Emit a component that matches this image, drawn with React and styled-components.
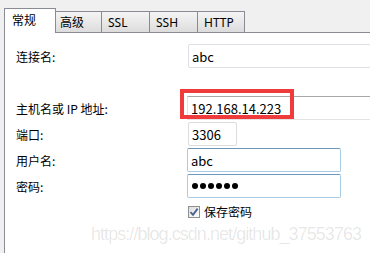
import React from "react";
import styled, { createGlobalStyle } from "styled-components";

const Global = createGlobalStyle`
  html, body { margin: 0; padding: 0; background: #f0f0f0; overflow: hidden; }
  * { box-sizing: border-box; }
`;

const Page = styled.div`
  position: relative;
  width: 370px;
  height: 253px;
  overflow: hidden;
  background: #f0f0f0;
  padding: 8px 0 0 4px;
  display: flex;
  flex-direction: column;
  font-family: "Noto Sans CJK SC", "Noto Sans", sans-serif;
  color: #000;
`;

const TabBar = styled.div`
  display: flex;
  align-items: flex-end;
  height: 25px;
  margin-bottom: -1px;
  position: relative;
  z-index: 1;
`;

const Tab = styled.div`
  width: ${(p) => p.$w}px;
  height: ${(p) => (p.$active ? 25 : 22)}px;
  margin-left: ${(p) => (p.$first ? 0 : -1)}px;
  padding-left: ${(p) => p.$pl}px;
  display: flex;
  align-items: center;
  border: 1px solid #898c95;
  border-bottom: ${(p) => (p.$active ? "none" : "1px solid #898c95")};
  background: ${(p) =>
    p.$active ? "#ffffff" : "linear-gradient(#f4f4f4, #e9e9e9 50%, #dcdcdc)"};
  position: relative;
  z-index: ${(p) => (p.$active ? 2 : 1)};
  font-family: "Noto Sans", "Noto Sans CJK SC", sans-serif;
  font-size: 12px;
  line-height: 1;
  padding-top: ${(p) => (p.$active ? 0 : 2)}px;
`;

const Panel = styled.div`
  flex: 1;
  background: #fff;
  border-top: 1px solid #898c95;
  border-left: 1px solid #898c95;
  padding: 11px 0 0 11px;
  display: flex;
  flex-direction: column;
`;

const Field = styled.div`
  display: flex;
  align-items: center;
  height: 24px;
  margin-top: ${(p) => p.$mt || 0}px;
`;

const Label = styled.div`
  width: 171px;
  flex: none;
  font-size: 12px;
  line-height: 1;
  padding-top: 1px;
`;

const borders = {
  plain: "border: 1px solid #dde1e6; border-radius: 2px;",
  gray: "border: 1px solid #e3e3e3; border-top-color: #a8a8a8;",
  light: "border: 1px solid #dcdcdc; border-radius: 2px;",
  blue: "border: 1px solid #a9cbe4; border-top-color: #6a97bd; border-radius: 2px;",
};

const Input = styled.div`
  position: relative;
  flex: none;
  width: ${(p) => p.$w}px;
  height: 24px;
  margin-left: ${(p) => p.$ml || 0}px;
  ${(p) => borders[p.$variant]}
  background: #fff;
  display: flex;
  align-items: center;
  padding-left: 3px;
  font-size: 13px;
  line-height: 1;
`;

const Highlight = styled.div`
  position: absolute;
  left: -8px;
  top: -8px;
  width: 114px;
  height: 30px;
  border: 4px solid #ef3b3b;
  pointer-events: none;
`;

const Dots = styled.div`
  display: flex;
  gap: 2px;
  padding-left: 1px;
`;

const Dot = styled.span`
  width: 6px;
  height: 6px;
  border-radius: 50%;
  background: #000;
`;

const CheckRow = styled.label`
  display: flex;
  align-items: center;
  gap: 4px;
  margin: 8px 0 0 172px;
  font-size: 12px;
  line-height: 1;
`;

const Box = styled.span`
  width: 12px;
  height: 12px;
  border: 1px solid #8e8f8f;
  background: linear-gradient(135deg, #dcdcdc, #ffffff);
  display: flex;
  align-items: center;
  justify-content: center;
`;

const Watermark = styled.div`
  position: absolute;
  left: 91px;
  top: 224px;
  font-family: "Liberation Sans", Arial, sans-serif;
  font-size: 18px;
  letter-spacing: -0.95px;
  color: rgba(0, 0, 0, 0.1);
  white-space: nowrap;
  pointer-events: none;
`;

const tabs = [
  { t: "常规", w: 52, pl: 7, active: true },
  { t: "高级", w: 47, pl: 4 },
  { t: "SSL", w: 49, pl: 6 },
  { t: "SSH", w: 49, pl: 6 },
  { t: "HTTP", w: 48, pl: 6 },
];

export default function App() {
  return (
    <>
      <Global />
      <Page>
        <TabBar>
          {tabs.map((t, i) => (
            <Tab key={t.t} $w={t.w} $pl={t.pl} $active={t.active} $first={i === 0}>
              {t.t}
            </Tab>
          ))}
        </TabBar>
        <Panel>
          <Field>
            <Label>连接名:</Label>
            <Input $w={200} $ml={1} $variant="plain">abc</Input>
          </Field>
          <Field $mt={28}>
            <Label>主机名或 IP 地址:</Label>
            <Input $w={200} $variant="gray">
              192.168.14.223
              <Highlight />
            </Input>
          </Field>
          <Field $mt={2}>
            <Label>端口:</Label>
            <Input $w={49} $ml={1} $variant="light">3306</Input>
          </Field>
          <Field $mt={2}>
            <Label>用户名:</Label>
            <Input $w={154} $variant="blue">abc</Input>
          </Field>
          <Field $mt={2}>
            <Label>密码:</Label>
            <Input $w={154} $variant="blue">
              <Dots>
                {Array.from({ length: 6 }).map((_, i) => (
                  <Dot key={i} />
                ))}
              </Dots>
            </Input>
          </Field>
          <CheckRow>
            <Box>
              <svg width="10" height="10" viewBox="0 0 10 10">
                <path d="M1.5 5.2 L4 7.8 L8.6 1.6" fill="none" stroke="#4a5f93" strokeWidth="1.8" />
              </svg>
            </Box>
            保存密码
          </CheckRow>
        </Panel>
        <Watermark>https://blog.csdn.net/github_37553763</Watermark>
      </Page>
    </>
  );
}
